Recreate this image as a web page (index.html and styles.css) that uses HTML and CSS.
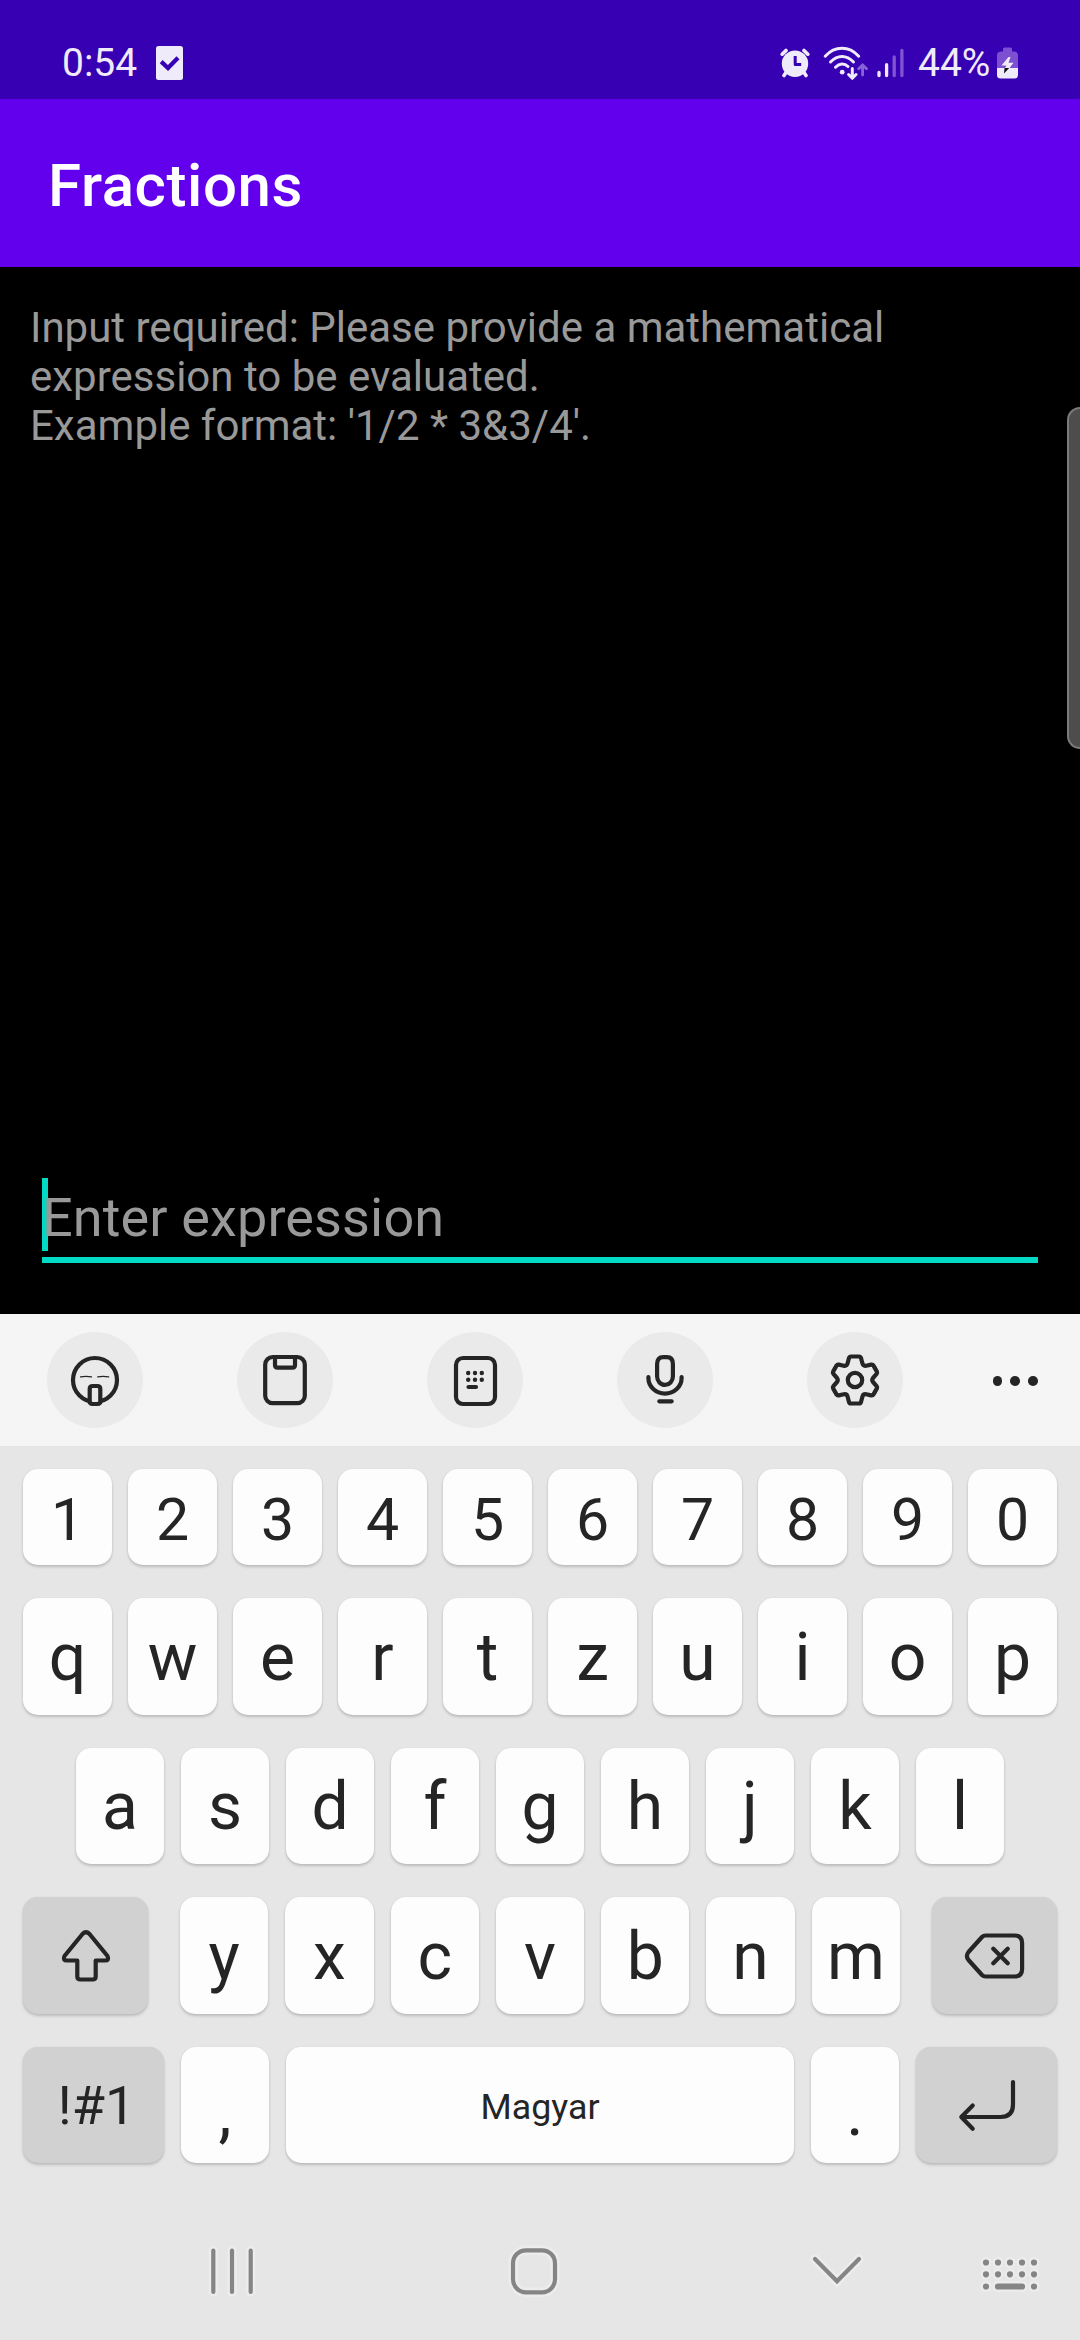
FILE: index.html
```html
<!DOCTYPE html>
<html lang="en">
<head>
<meta charset="utf-8">
<title>Fractions</title>
<link rel="stylesheet" href="styles.css">
</head>
<body>
<div class="screen">
  <header class="status">
    <span class="clock">0:54</span>
    <svg class="check" width="27" height="34" viewBox="0 0 27 34"><rect width="27" height="34" rx="2.5" fill="#f0ebfb"/><path d="M5.2 15.6l6.8 6.4L22 11.8" fill="none" stroke="#3700b3" stroke-width="4.2"/></svg>
    <div class="indicators">
      <svg class="alarm" width="30" height="30" viewBox="0 0 30 30"><g stroke="#f0ebfb" stroke-width="3.6" stroke-linecap="round"><path d="M2.2 6.2l3.8-3.8M27.8 6.2L24 2.4M6 24.500l-2 3M24 24.500l2 3"/></g><circle cx="15" cy="15.700" r="13.200" fill="#f0ebfb"/><path d="M15.200 8v8.500h6" fill="none" stroke="#3700b3" stroke-width="3" stroke-linejoin="round"/></svg>
      <svg class="wifi" width="45" height="34" viewBox="0 0 45 34"><g fill="none" stroke="#f0ebfb" stroke-width="3" stroke-linecap="round"><path d="M2.200 10.200C12 -.4 26 -.4 35.700 10.200M7.500 16C14.500 8.600 23.500 8.600 30.500 16M12.500 21.200C16.500 17 21.500 17 25 20.500"/><path d="M29.300 22.500v9.500M25.600 28.500l3.700 3.700 3.700-3.700"/></g><circle cx="19.200" cy="26.200" r="2.400" fill="#f0ebfb"/><path d="M39.600 29v-9M35.700 22.800l3.900-3.900 3.900 3.900" fill="none" stroke="#8863d6" stroke-width="2.800" stroke-linecap="round"/></svg>
      <svg class="signal" width="27" height="30" viewBox="0 0 27 30"><g stroke-width="3.300" stroke-linecap="round"><path d="M2 24.500v3M9.600 16.700v10.800" stroke="#f0ebfb"/><path d="M17.200 9v18.500M24.900 2.500v25" stroke="#8055d2"/></g></svg>
      <span class="percent">44%</span>
      <svg class="battery" width="21" height="32" viewBox="0 0 21 32"><path d="M6 4.500V2q0-1.500 1.500-1.500h6Q15 .5 15 2v2.500h2.500Q21 5 21 8v13H0V8q0-3 3.500-3.500z" fill="#7c50d0"/><path d="M0 21h21v7q0 3.500-3.500 3.500h-14Q0 31.500 0 28z" fill="#f0ebfb"/><path d="M11.500 10L4.500 18.500h5L8 21h4.500l4-5.200h-5l2-5.800z" fill="#f0ebfb"/><path d="M7.500 21h4.700L7 26.500z" fill="#111"/></svg>
    </div>
  </header>

  <div class="appbar"><h1>Fractions</h1></div>

  <main class="content">
    <p class="message">Input required: Please provide a mathematical<br>expression to be evaluated.<br>Example format: '1/2 * 3&amp;3/4'.</p>
    <div class="field"><span class="cursor"></span><span class="hint">Enter expression</span></div>
    <div class="edge-handle"></div>
  </main>

  <div class="toolbar">
    <span class="tool"><svg viewBox="0 0 96 96"><circle cx="48" cy="48" r="22"/><path d="M33.500 44.800q5.500-1 11 0M50.700 44.800q5.500-1 11 0" stroke-width="1.2"/><path d="M42.700 70.500V57q0-3 3-3h4.600q3 0 3 3v13.500q-1.300 1.500-3 1.500h-4.600q-1.700 0-3-1.500z" fill="#eaeaea"/></svg></span>
    <span class="tool"><svg viewBox="0 0 96 96"><rect x="28.200" y="25" width="39.600" height="46.200" rx="7.500"/><path d="M38 25v8q0 2.600 2.600 2.600h14.800q2.600 0 2.600-2.600v-8"/></svg></span>
    <span class="tool"><svg viewBox="0 0 96 96"><rect x="29" y="26" width="39" height="46" rx="7"/><g class="solid"><circle cx="41.200" cy="41" r="2.200"/><circle cx="48" cy="41" r="2.200"/><circle cx="54.800" cy="41" r="2.200"/><circle cx="41.200" cy="47.700" r="2.200"/><circle cx="48" cy="47.700" r="2.200"/><circle cx="54.800" cy="47.700" r="2.200"/></g><path d="M41.500 55H49"/></svg></span>
    <span class="tool"><svg viewBox="0 0 96 96"><path d="M40.100 32q0-6.800 6-6.800h3.800q6 0 6 6.800v12.500a7.900 8.400 0 0 1-15.800 0z"/><path d="M31.400 45v1a16.600 15.600 0 0 0 33.200 0v-1M42.300 69.300h12.400"/></svg></span>
    <span class="tool"><svg viewBox="0 0 96 96"><circle cx="48" cy="48" r="7.200"/><path d="M44 24.500h8q1.500 0 2 1.500l1.400 5.300q.8 3 3.800 2.400l5-1.100q1.500-.3 2.300 1l3.400 6q.6 1.200-.3 2.300L66 46q-1.500 2 0 4l3.600 4.100q.9 1.100.3 2.300l-3.400 6q-.8 1.300-2.300 1l-5-1.100q-3-.6-3.800 2.400L54 70q-.5 1.500-2 1.500h-8q-1.500 0-2-1.500l-1.400-5.300q-.8-3-3.800-2.400l-5 1.100q-1.500.3-2.300-1l-3.400-6q-.6-1.200.3-2.300L30 50q1.500-2 0-4l-3.600-4.100q-.9-1.100-.3-2.300l3.400-6q.8-1.300 2.300-1l5 1.100q3 .6 3.800-2.400L42 26q.5-1.500 2-1.500z"/></svg></span>
    <span class="more"><i></i><i></i><i></i></span>
  </div>

  <section class="keyboard">
    <div class="row digits"><b>1</b><b>2</b><b>3</b><b>4</b><b>5</b><b>6</b><b>7</b><b>8</b><b>9</b><b>0</b></div>
    <div class="row"><b>q</b><b>w</b><b>e</b><b>r</b><b>t</b><b>z</b><b>u</b><b>i</b><b>o</b><b>p</b></div>
    <div class="row home"><b>a</b><b>s</b><b>d</b><b>f</b><b>g</b><b>h</b><b>j</b><b>k</b><b>l</b></div>
    <div class="row lower">
      <b class="fn side"><svg width="60" height="60" viewBox="0 0 60 60"><path d="M26.500 8q3.500-3.500 7 0L51.500 30q2 4.500-2.500 4.500h-9.300v16q0 3-3 3H24.300q-3 0-3-3v-16H11q-4.500 0-2.500-4.500z"/></svg></b>
      <div class="row letters"><b>y</b><b>x</b><b>c</b><b>v</b><b>b</b><b>n</b><b>m</b></div>
      <b class="fn side"><svg width="64" height="52" viewBox="0 0 64 52"><path d="M22.500 5.500h29q7.600 0 7.600 7.500v26q0 7.500-7.600 7.500h-29q-2 0-3.500-1.500L5.500 30q-3.200-4 0-8L19 7q1.500-1.500 3.500-1.500zM30.300 18.800l14.400 14.400M44.700 18.800L30.300 33.200"/></svg></b>
    </div>
    <div class="row bottom">
      <b class="fn symbols">!#1</b>
      <b class="punct">,</b>
      <b class="space">Magyar</b>
      <b class="punct">.</b>
      <b class="fn"><svg width="64" height="56" viewBox="0 0 64 56"><path d="M58 5v22.500q0 12.500-12.500 12.500H6.500M17.700 28.500L6.300 40l11.400 11.700"/></svg></b>
    </div>
  </section>

  <nav class="navbar">
    <svg class="recents" width="60" height="60" viewBox="0 0 60 60"><path class="halo" d="M11.300 9.500v41.500M30 9.500v41.500M48.700 9.500v41.500"/><path d="M11.300 9.500v41.500M30 9.500v41.500M48.700 9.500v41.500"/></svg>
    <svg class="homebtn" width="60" height="60" viewBox="0 0 60 60"><rect class="halo" x="9" y="9.300" width="42" height="42" rx="13"/><rect x="9" y="9.300" width="42" height="42" rx="13"/></svg>
    <svg class="hide" width="60" height="60" viewBox="0 0 60 60"><path class="halo" d="M8 18l22 22.300L52 18"/><path d="M8 18l22 22.300L52 18"/></svg>
    <svg class="switch" width="60" height="60" viewBox="0 0 60 60"><path class="halo" d="M6 21.500h0M18 21.500h0M30 21.500h0M42 21.500h0M54 21.500h0M6 33.300h0M18 33.300h0M30 33.300h0M42 33.300h0M54 33.300h0M6 45.500h0M18 45.500h24M54 45.500h0"/><path d="M6 21.500h0M18 21.500h0M30 21.500h0M42 21.500h0M54 21.500h0M6 33.300h0M18 33.300h0M30 33.300h0M42 33.300h0M54 33.300h0M6 45.500h0M18 45.500h24M54 45.500h0"/></svg>
  </nav>
</div>
</body>
</html>
```
FILE: styles.css
```css
* { box-sizing: border-box; }
body { margin: 0; background: #000; font-family: Roboto, "Noto Sans", sans-serif; }
svg { display: block; flex: none; }

.screen { display: flex; flex-direction: column; width: 1080px; height: 2340px; overflow: hidden; background: #e6e6e6; }

.status {
  display: flex; align-items: center; height: 99px; padding: 27px 62px 0 62px;
  background: #3700b3; color: #f0ebfb; font-size: 39px; line-height: 46px;
}
.clock { width: 94px; }
.indicators { display: flex; align-items: center; margin-left: auto; }
.wifi { margin-left: 13px; }
.signal { margin-left: 9px; }
.percent { margin-left: 14px; width: 79px; }

.appbar { display: flex; align-items: center; height: 168px; padding: 5px 48px 0; background: #6200ee; }
.appbar h1 { margin: 0; color: #fff; font-size: 60px; font-weight: 500; line-height: 70px; letter-spacing: .6px; }

.content {
  position: relative; display: flex; flex-direction: column; justify-content: space-between;
  height: 1047px; padding: 36px 42px 51px 30px; background: #000; color: #999;
}
.message { margin: 0; font-size: 42px; line-height: 49px; }
.field {
  position: relative; height: 85px; margin-left: 12px;
  border-bottom: 6px solid #03dac5; font-size: 54px; line-height: 79px; letter-spacing: .13px;
}
.cursor { position: absolute; left: 0; top: 0; width: 6px; height: 73px; background: #03dac5; }
.hint { position: relative; }
.edge-handle {
  position: absolute; right: 0; top: 140px; width: 13px; height: 342px;
  background: #4d4d4d; border: 2px solid #7b7b7b; border-right: 0; border-radius: 13px 0 0 13px;
}

.toolbar { display: flex; align-items: center; gap: 94px; height: 132px; padding-left: 47px; background: #f5f5f5; }
.tool { width: 96px; height: 96px; border-radius: 50%; background: #eaeaea; }
.tool svg, .fn svg { fill: none; stroke: #252525; stroke-width: 4.2; stroke-linecap: round; stroke-linejoin: round; }
.tool .solid { fill: #252525; stroke: none; }
.more { display: flex; gap: 8px; margin-left: -4.500px; padding-top: 2px; }
.more i { width: 9.700px; height: 9.700px; border-radius: 50%; background: #252525; }

.keyboard { display: grid; grid-template-rows: 96px 117px 116px 117px 116px; gap: 33px; padding: 23px 23px 0; }
.row { display: flex; gap: 16px; min-width: 0; }
.row b {
  display: flex; align-items: center; justify-content: center; flex: 1 1 0; min-width: 0;
  padding-top: 2px; border-radius: 15px; background: #fdfdfd; color: #252525;
  font-size: 66px; font-weight: 400; line-height: 76px;
  box-shadow: 0 2px 3px rgba(0, 0, 0, .18), 0 0 2px rgba(0, 0, 0, .06);
}
.digits b { padding-top: 6px; font-size: 59px; }
.home { gap: 17px; padding: 0 53px; }
.lower { gap: 32px; }
.letters { flex: 1; gap: 17px; }
.bottom { gap: 17px; }
.row .fn { background: #d1d1d1; padding-top: 0; flex: 0 0 141px; }
.row .side { flex-basis: 125px; }
.row .symbols { font-size: 54px; padding: 2px 0 0 6px; }
.row .punct { flex: 0 0 88px; padding-top: 15px; }
.row .space { font-size: 35.800px; padding-top: 3px; }

.navbar { display: flex; align-items: flex-start; flex: 1; padding-top: 78px; }
.navbar svg { overflow: visible; fill: none; stroke: #858585; stroke-width: 4.2; stroke-linecap: round; }
.navbar .halo { stroke: #ececec; stroke-width: 9.500; }
.recents { margin-left: 202px; }
.homebtn { margin-left: 242px; }
.hide { margin-left: 243px; }
.switch { margin-left: 113px; }
.navbar .switch { stroke-width: 6.200; }
.navbar .switch .halo { stroke-width: 11; }
```
